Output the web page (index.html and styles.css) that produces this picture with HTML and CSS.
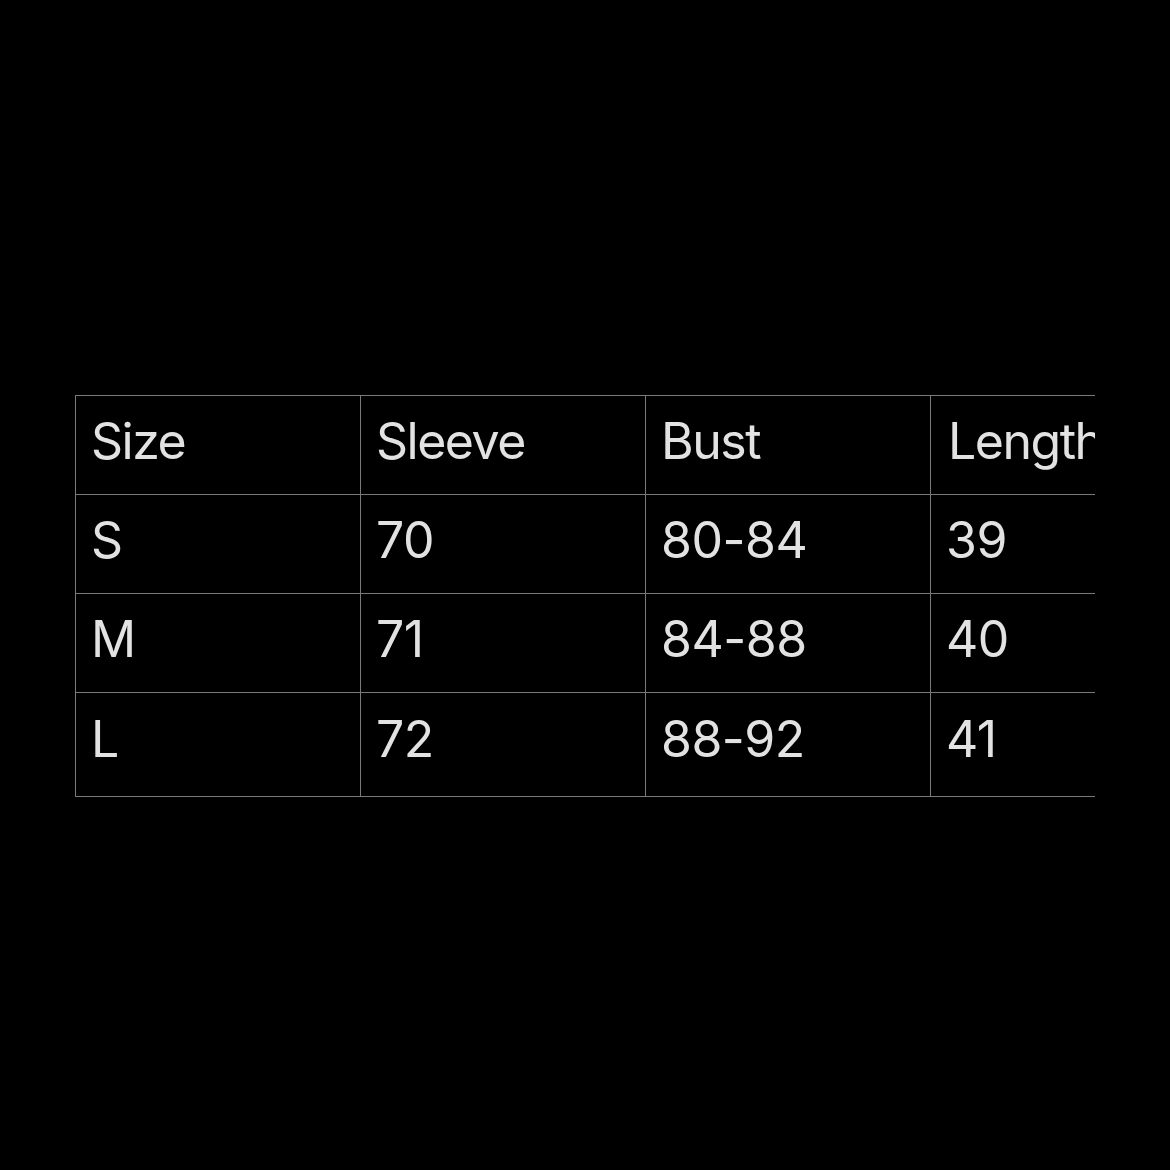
FILE: index.html
```html
<!DOCTYPE html>
<html>
<head>
<meta charset="utf-8">
<link rel="stylesheet" href="styles.css">
</head>
<body>
<div class="page">
  <div class="clip">
    <table class="sizes">
      <tr><td>Size</td><td>Sleeve</td><td>Bust</td><td>Length</td></tr>
      <tr><td>S</td><td>70</td><td>80-84</td><td>39</td></tr>
      <tr><td>M</td><td>71</td><td>84-88</td><td>40</td></tr>
      <tr class="last"><td>L</td><td>72</td><td>88-92</td><td>41</td></tr>
    </table>
  </div>
</div>
</body>
</html>
```
FILE: styles.css
```css
html, body {
  margin: 0;
  padding: 0;
  background: #000;
}
.page {
  width: 1170px;
  height: 1170px;
  padding: 395px 0 0 75px;
  box-sizing: border-box;
}
.clip {
  width: 1020px;
  overflow: hidden;
}
.sizes {
  border-collapse: collapse;
  width: 1141px;
  table-layout: fixed;
  font-family: Inter, "Liberation Sans", sans-serif;
  font-size: 50px;
  letter-spacing: -1.5px;
  color: #e2e2e2;
}
.num {
  letter-spacing: -0.5px;
}
.sizes td {
  border: 1px solid #7a7a7a;
  height: 99px;
  padding: 0 0 8px 15px;
  box-sizing: border-box;
  width: 285px;
  vertical-align: middle;
  white-space: nowrap;
  line-height: 1;
}
.sizes tr.last td {
  height: 104px;
  padding-bottom: 12px;
}
.sizes tr + tr td {
  letter-spacing: -0.5px;
}
.sizes tr:first-child td:last-child {
  padding-left: 17px;
}
```
